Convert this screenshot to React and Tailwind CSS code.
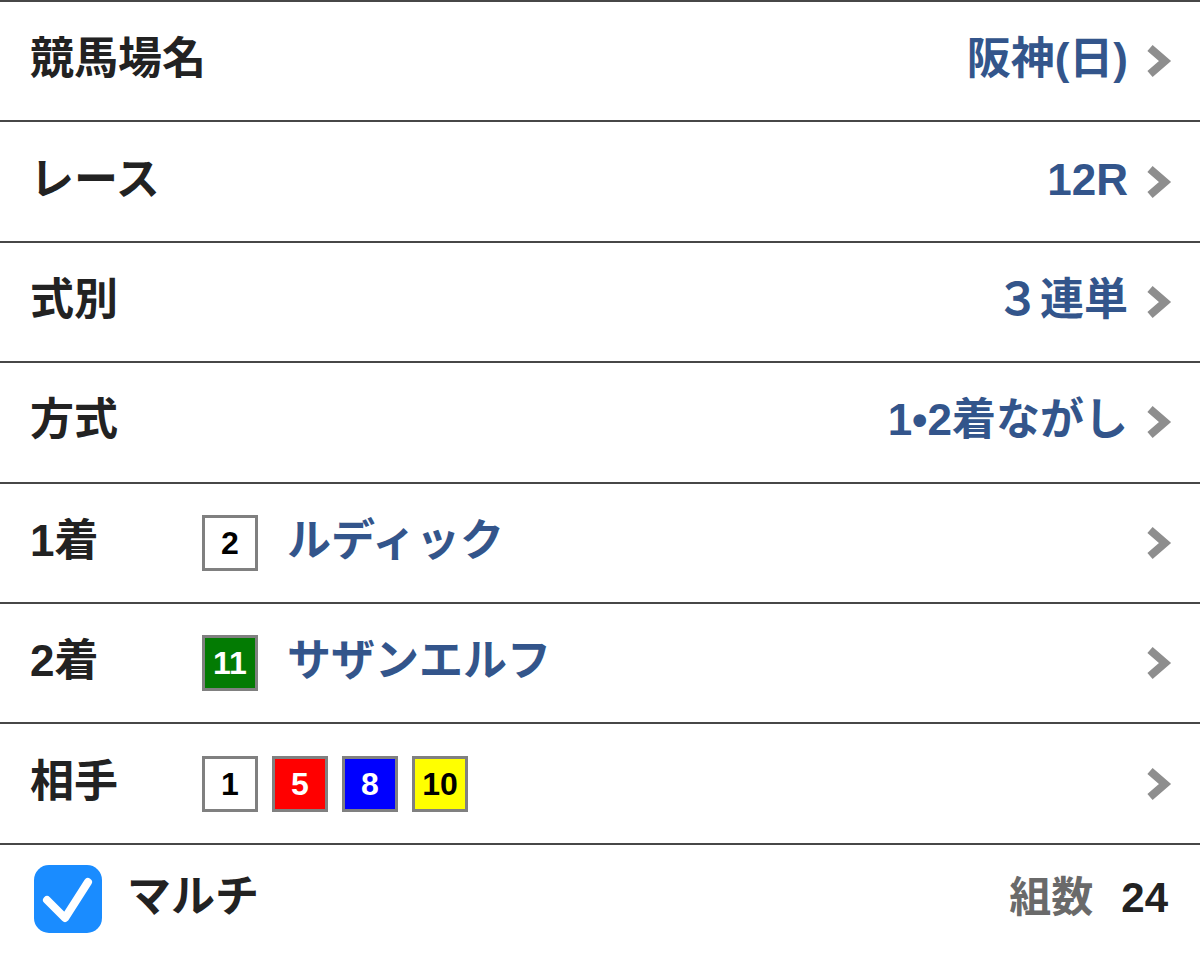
import React from "react";

const font = {
  fontFamily: '"Liberation Sans", "Noto Sans CJK JP", sans-serif',
};

const Chevron = () => (
  <svg width="28" height="36" viewBox="0 0 28 36" className="shrink-0">
    <polyline
      points="6,5 21,18 6,31"
      fill="none"
      stroke="#8e8e8e"
      strokeWidth="8"
      strokeLinecap="butt"
      strokeLinejoin="miter"
    />
  </svg>
);

const Badge = ({ num, bg, color }) => (
  <div
    className={`w-[56px] h-[56px] border-[3px] border-[#808080] flex items-center justify-center text-[32px] font-bold ${bg} ${color}`}
  >
    {num}
  </div>
);

const Row = ({ label, children, value }) => (
  <div className="h-[120.4px] border-t-2 border-[#474747] flex items-center pl-[30px] pr-[28px]">
    <div className="text-[44px] font-bold text-[#222] w-[172px] shrink-0 whitespace-nowrap leading-none pb-[4px]">
      {label}
    </div>
    <div className="flex-1 flex items-center">{children}</div>
    {value && (
      <div className="text-[44px] font-bold text-[#33558b] whitespace-nowrap leading-none mr-[16px] pb-[4px]">
        {value}
      </div>
    )}
    <Chevron />
  </div>
);

const App = () => {
  return (
    <div className="w-[1200px] h-[954px] bg-white overflow-hidden" style={font}>
      <Row label="競馬場名" value="阪神(日)" />
      <Row label="レース" value="12R" />
      <Row label="式別" value="３連単" />
      <Row label="方式" value="1•2着ながし" />
      <Row label="1着">
        <Badge num="2" bg="bg-white" color="text-black" />
        <span className="ml-[29px] text-[44px] font-bold text-[#33558b] leading-none pb-[4px]">
          ルディック
        </span>
      </Row>
      <Row label="2着">
        <Badge num="11" bg="bg-[#037b03]" color="text-white" />
        <span className="ml-[29px] text-[44px] font-bold text-[#33558b] leading-none pb-[4px]">
          サザンエルフ
        </span>
      </Row>
      <Row label="相手">
        <div className="flex gap-[14px]">
          <Badge num="1" bg="bg-white" color="text-black" />
          <Badge num="5" bg="bg-[#ff0000]" color="text-white" />
          <Badge num="8" bg="bg-[#0000ff]" color="text-white" />
          <Badge num="10" bg="bg-[#ffff00]" color="text-black" />
        </div>
      </Row>
      <div className="h-[111px] border-t-2 border-[#474747] flex items-center pl-[34px] pr-[32px]">
        <div className="w-[68px] h-[68px] rounded-[15px] bg-[#1a8cff] shrink-0">
          <svg width="68" height="68" viewBox="0 0 68 68">
            <polyline
              points="13,35 31,53 54,17"
              fill="none"
              stroke="white"
              strokeWidth="8"
              strokeLinecap="round"
              strokeLinejoin="round"
            />
          </svg>
        </div>
        <span className="ml-[25px] text-[44px] font-bold text-[#222] leading-none pb-[4px]">
          マルチ
        </span>
        <div className="flex-1" />
        <span className="text-[42px] font-bold text-[#6a6a6a] leading-none pb-[2px]">
          組数
        </span>
        <span className="ml-[28px] text-[42px] font-bold text-[#222] leading-none pb-[2px]">
          24
        </span>
      </div>
    </div>
  );
};

export default App;
